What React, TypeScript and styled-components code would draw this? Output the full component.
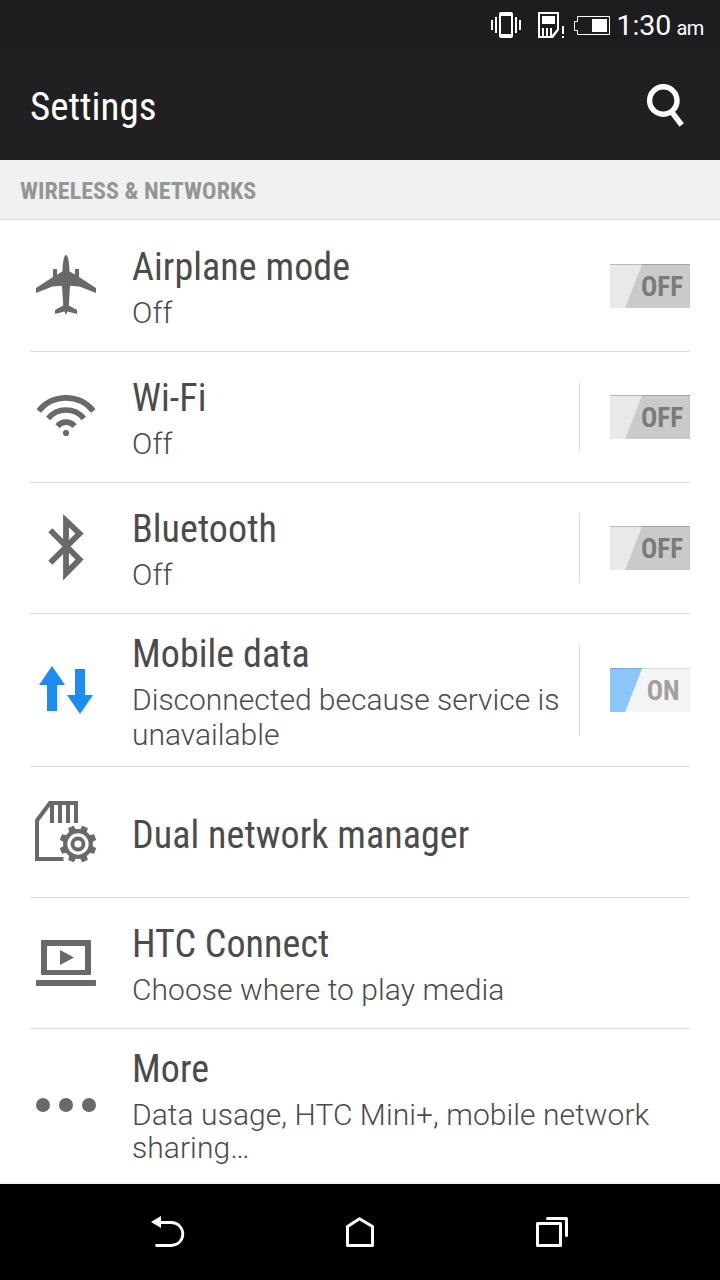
import React from "react";
import styled, { createGlobalStyle } from "styled-components";

const GlobalStyle = createGlobalStyle`
  *, *::before, *::after { box-sizing: border-box; }
  html, body { margin: 0; padding: 0; background: #fff; }
  body { font-family: Roboto, "Liberation Sans", sans-serif; color: #4b4b4b; }
  svg { display: block; }
`;

const condensed = `
  font-family: "Roboto Condensed", Roboto, sans-serif;
  font-stretch: 75%;
`;

const Screen = styled.div`
  width: 720px;
  height: 1280px;
  display: flex;
  flex-direction: column;
  overflow: hidden;
  background: #fff;
`;

const StatusBar = styled.header`
  height: 50px;
  flex: none;
  display: flex;
  align-items: center;
  justify-content: flex-end;
  background: #1d1d1f;
  color: #fff;
  padding-right: 16px;
`;

const StatusIcons = styled.div`
  margin-right: 6px;
`;

const Clock = styled.div`
  width: 88px;
  font-size: 28.5px;
  line-height: 50px;
  padding-top: 4px;
  text-align: right;
  white-space: nowrap;
`;

const Meridiem = styled.span`
  font-size: 20px;
  letter-spacing: -0.4px;
  margin-left: 5px;
`;

const TitleBar = styled.div`
  height: 110px;
  flex: none;
  display: flex;
  align-items: center;
  justify-content: space-between;
  background: #202022;
  padding: 0 34px 0 30px;
`;

const PageTitle = styled.h1`
  ${condensed}
  margin: 0;
  padding-top: 3px;
  font-size: 39px;
  font-weight: 400;
  line-height: 50px;
  color: #fff;
`;

const SectionHeader = styled.h2`
  ${condensed}
  margin: 0;
  height: 60px;
  flex: none;
  padding: 2px 20px 0;
  border-bottom: 1px solid #dcdcdc;
  background: #f0f2f1;
  color: #959595;
  font-size: 24px;
  font-weight: 700;
  letter-spacing: 0.04px;
  line-height: 59px;
`;

const List = styled.main`
  flex: 1;
  padding: 1px 30px 0;
  border-bottom: 2px solid #f3f3f3;
`;

const Row = styled.div<{ $height: number }>`
  height: ${(p) => p.$height}px;
  display: flex;
  align-items: center;
  border-bottom: 1px solid #dcdcdc;
  &:last-child { border-bottom: 0; }
`;

const IconCell = styled.div`
  width: 72px;
  height: 72px;
  flex: none;
  margin-right: 30px;
  color: #696969;
`;

const Labels = styled.div<{ $top: number; $bottom: number }>`
  flex: 1;
  min-width: 0;
  padding-top: ${(p) => p.$top}px;
  padding-bottom: ${(p) => p.$bottom}px;
`;

const RowTitle = styled.div`
  ${condensed}
  font-size: 38px;
  letter-spacing: 0.07px;
  line-height: 54px;
  white-space: nowrap;
`;

const RowDetail = styled.div<{ $leading: number; $gap: number; $tracking: number }>`
  margin-top: ${(p) => p.$gap}px;
  font-size: 30px;
  font-weight: 300;
  letter-spacing: ${(p) => p.$tracking}px;
  line-height: ${(p) => p.$leading}px;
  white-space: pre;
`;

const Divider = styled.div`
  width: 1px;
  flex: none;
  align-self: stretch;
  margin: 30px 30px 30px 0;
  background: #dcdcdc;
`;

const Switch = styled.div<{ $on: boolean }>`
  ${condensed}
  width: 80px;
  height: 44px;
  flex: none;
  text-align: right;
  padding-right: ${(p) => (p.$on ? 10.5 : 7)}px;
  font-size: 27px;
  font-weight: 700;
  line-height: 46px;
  color: ${(p) => (p.$on ? "#a0a0a0" : "#7b7b7b")};
  background:
    linear-gradient(rgba(0, 0, 0, ${(p) => (p.$on ? 0.12 : 0.2)}), rgba(0, 0, 0, ${(p) => (p.$on ? 0.12 : 0.2)})) 0 0 / 100% 1px no-repeat,
    linear-gradient(111.2deg, ${(p) => (p.$on ? "#8cc6f9" : "#e9e9e9")} 29.6px, ${(p) => (p.$on ? "#f4f4f4" : "#cacaca")} 30.4px);
`;

const NavBar = styled.nav`
  height: 96px;
  flex: none;
  display: flex;
  align-items: center;
  justify-content: center;
  background: #000;
`;

const NavButton = styled.div`
  width: 192px;
  display: flex;
  justify-content: center;
`;

function Airplane() {
  return (
    <svg width="72" height="72" viewBox="0 0 72 72" fill="currentColor">
      <path d="M36 5C37.8 5 39.2 11 39.6 21.5L45 24.5V19H49V27L66 38V43L49.5 36.5L40 35.7L38.800 55.5L47 60V64L37.6 61.5L36 65L34.4 61.5L25 64V60L33.2 55.5L32 35.7L22.5 36.5L6 43V38L23 27V19H27V24.5L32.4 21.5C32.800 11 34.2 5 36 5Z" />
    </svg>
  );
}

function Wifi() {
  return (
    <svg width="72" height="72" viewBox="0 0 72 72" fill="none" stroke="currentColor" strokeWidth="5.6">
      <path d="M8.700 29.900A35.200 35.200 0 0 1 63.300 29.900" />
      <path d="M18.200 37.500A23 23 0 0 1 53.800 37.500" />
      <path d="M27.500 45.100A11 11 0 0 1 44.500 45.100" />
      <circle cx="36" cy="52" r="3.1" fill="currentColor" stroke="none" />
    </svg>
  );
}

function Bluetooth() {
  return (
    <svg width="72" height="72" viewBox="0 0 72 72" fill="none" stroke="currentColor" strokeWidth="5.8">
      <path d="M20.300 18.300L49.500 47.500L36 61.300V8.700L49.500 21.500L20.300 50.700" />
    </svg>
  );
}

function MobileData() {
  return (
    <svg width="72" height="72" viewBox="0 0 72 72" fill="#1b8df2">
      <path d="M22 12L35 31H27V57H17V31H9Z" />
      <path d="M45 15H55V41H63L50 60L37 41H45Z" />
    </svg>
  );
}

function DualSim() {
  return (
    <svg width="72" height="72" viewBox="0 0 72 72" fill="none" stroke="currentColor" strokeWidth="4">
      <path d="M33.500 63H7V24.500L20 7H46V27" />
      <path d="M22 7V27M30 7V27M38 7V27" />
      <circle cx="48" cy="48" r="12.800" strokeWidth="4.200" />
      <circle cx="48" cy="48" r="5.500" strokeWidth="3.800" />
      {[22.5, 67.5, 112.5, 157.5, 202.5, 247.5, 292.5, 337.5].map((a) => (
        <path key={a} d="M44.300 35L45 29.500H51L51.700 35Z" fill="currentColor" stroke="none" transform={`rotate(${a} 48 48)`} />
      ))}
    </svg>
  );
}

function Connect() {
  return (
    <svg width="72" height="72" viewBox="0 0 72 72" fill="currentColor">
      <path fillRule="evenodd" d="M12 13H60Q61 13 61 14V47Q61 48 60 48H12Q11 48 11 47V14Q11 13 12 13ZM17 19V43H55V19Z" />
      <path d="M30 23V38L44 30.500Z" />
      <rect x="6" y="53" width="60" height="6" rx="1" />
    </svg>
  );
}

function More() {
  return (
    <svg width="72" height="72" viewBox="0 0 72 72" fill="currentColor">
      <circle cx="13" cy="36" r="7" />
      <circle cx="36" cy="36" r="7" />
      <circle cx="59" cy="36" r="7" />
    </svg>
  );
}

interface Item {
  title: string;
  detail?: string;
  icon: React.ReactNode;
  height: number;
  leading?: number;
  gap?: number;
  tracking?: number;
  top?: number;
  bottom?: number;
  divider?: boolean;
  state?: "ON" | "OFF";
}

const items: Item[] = [
  { title: "Airplane mode", detail: "Off", icon: <Airplane />, height: 131, bottom: 2, state: "OFF" },
  { title: "Wi-Fi", detail: "Off", icon: <Wifi />, height: 131, bottom: 2, state: "OFF", divider: true },
  { title: "Bluetooth", detail: "Off", icon: <Bluetooth />, height: 131, bottom: 2, state: "OFF", divider: true },
  {
    title: "Mobile data",
    detail: "Disconnected because service is\nunavailable",
    icon: <MobileData />,
    height: 153,
    bottom: 1,
    tracking: -0.01,
    state: "ON",
    divider: true,
  },
  { title: "Dual network manager", icon: <DualSim />, height: 131, top: 5 },
  { title: "HTC Connect", detail: "Choose where to play media", icon: <Connect />, height: 131, bottom: 2 },
  {
    title: "More",
    detail: "Data usage, HTC Mini+, mobile network\nsharing…",
    icon: <More />,
    height: 152,
    leading: 33,
    gap: 2,
    bottom: 4,
  },
];

export default function App() {
  return (
    <Screen>
      <GlobalStyle />
      <StatusBar>
        <StatusIcons>
          <svg width="120" height="30" viewBox="490 10 120 30" fill="#fff">
            <path d="M491 20h2v10h-2zM495 17h2v16h-2zM515 17h2v16h-2zM519 20h2v10h-2z" />
            <path fillRule="evenodd" d="M501 12h10q2 0 2 2v22q0 2-2 2h-10q-2 0-2-2v-22q0-2 2-2zM501 16v18h10v-18z" />
            <path fillRule="evenodd" d="M538 12h21v18l-6 8h-15zM540 14v22h2v-8h2v8h2v-8h2v8h2v-8h2v7l5-6v-15z" />
            <path d="M542 16h13v8h-13zM562 26h2v8h-2zM562 36h2v2h-2z" />
            <path d="M577.500 16.500H609.500V34.500H577.500V30.500H574.500V21.500H577.500Z" fill="none" stroke="#fff" />
            <path d="M592 19h15v13h-15z" />
          </svg>
        </StatusIcons>
        <Clock>1:30<Meridiem>am</Meridiem></Clock>
      </StatusBar>
      <TitleBar>
        <PageTitle>Settings</PageTitle>
        <svg width="42" height="46" viewBox="644 82 42 46" fill="none" stroke="#fff">
          <circle cx="663.300" cy="100.500" r="13.700" strokeWidth="5.400" />
          <path d="M671 111L681.700 125" strokeWidth="5.400" />
        </svg>
      </TitleBar>
      <SectionHeader>WIRELESS &amp; NETWORKS</SectionHeader>
      <List>
        {items.map((item) => (
          <Row key={item.title} $height={item.height}>
            <IconCell>{item.icon}</IconCell>
            <Labels $top={item.top ?? 0} $bottom={item.bottom ?? 0}>
              <RowTitle>{item.title}</RowTitle>
              {item.detail && (
                <RowDetail $leading={item.leading ?? 35} $gap={item.gap ?? 1} $tracking={item.tracking ?? 0.06}>
                  {item.detail}
                </RowDetail>
              )}
            </Labels>
            {item.divider && <Divider />}
            {item.state && <Switch $on={item.state === "ON"}>{item.state}</Switch>}
          </Row>
        ))}
      </List>
      <NavBar>
        <NavButton>
          <svg width="36" height="36" viewBox="150 1214 36 36" fill="none" stroke="#fff" strokeWidth="2.800">
            <path d="M160 1222.500H171.300A11.400 11.400 0 0 1 171.300 1245.500H156.500" strokeLinecap="round" />
            <path d="M151 1222L161 1216V1228Z" fill="#fff" stroke="none" />
          </svg>
        </NavButton>
        <NavButton>
          <svg width="36" height="36" viewBox="342 1214 36 36" fill="none" stroke="#fff" strokeWidth="3" strokeLinejoin="round">
            <path d="M347.500 1226.500L359.500 1218.700L372.500 1226.500V1245.500H347.500Z" />
          </svg>
        </NavButton>
        <NavButton>
          <svg width="36" height="36" viewBox="534 1214 36 36" fill="none" stroke="#fff" strokeWidth="3" strokeLinejoin="round">
            <path d="M537.500 1223.500H560.500V1245.500H537.500Z" />
            <path d="M547.500 1218.500H566.500V1235.500" strokeLinecap="round" />
          </svg>
        </NavButton>
      </NavBar>
    </Screen>
  );
}
